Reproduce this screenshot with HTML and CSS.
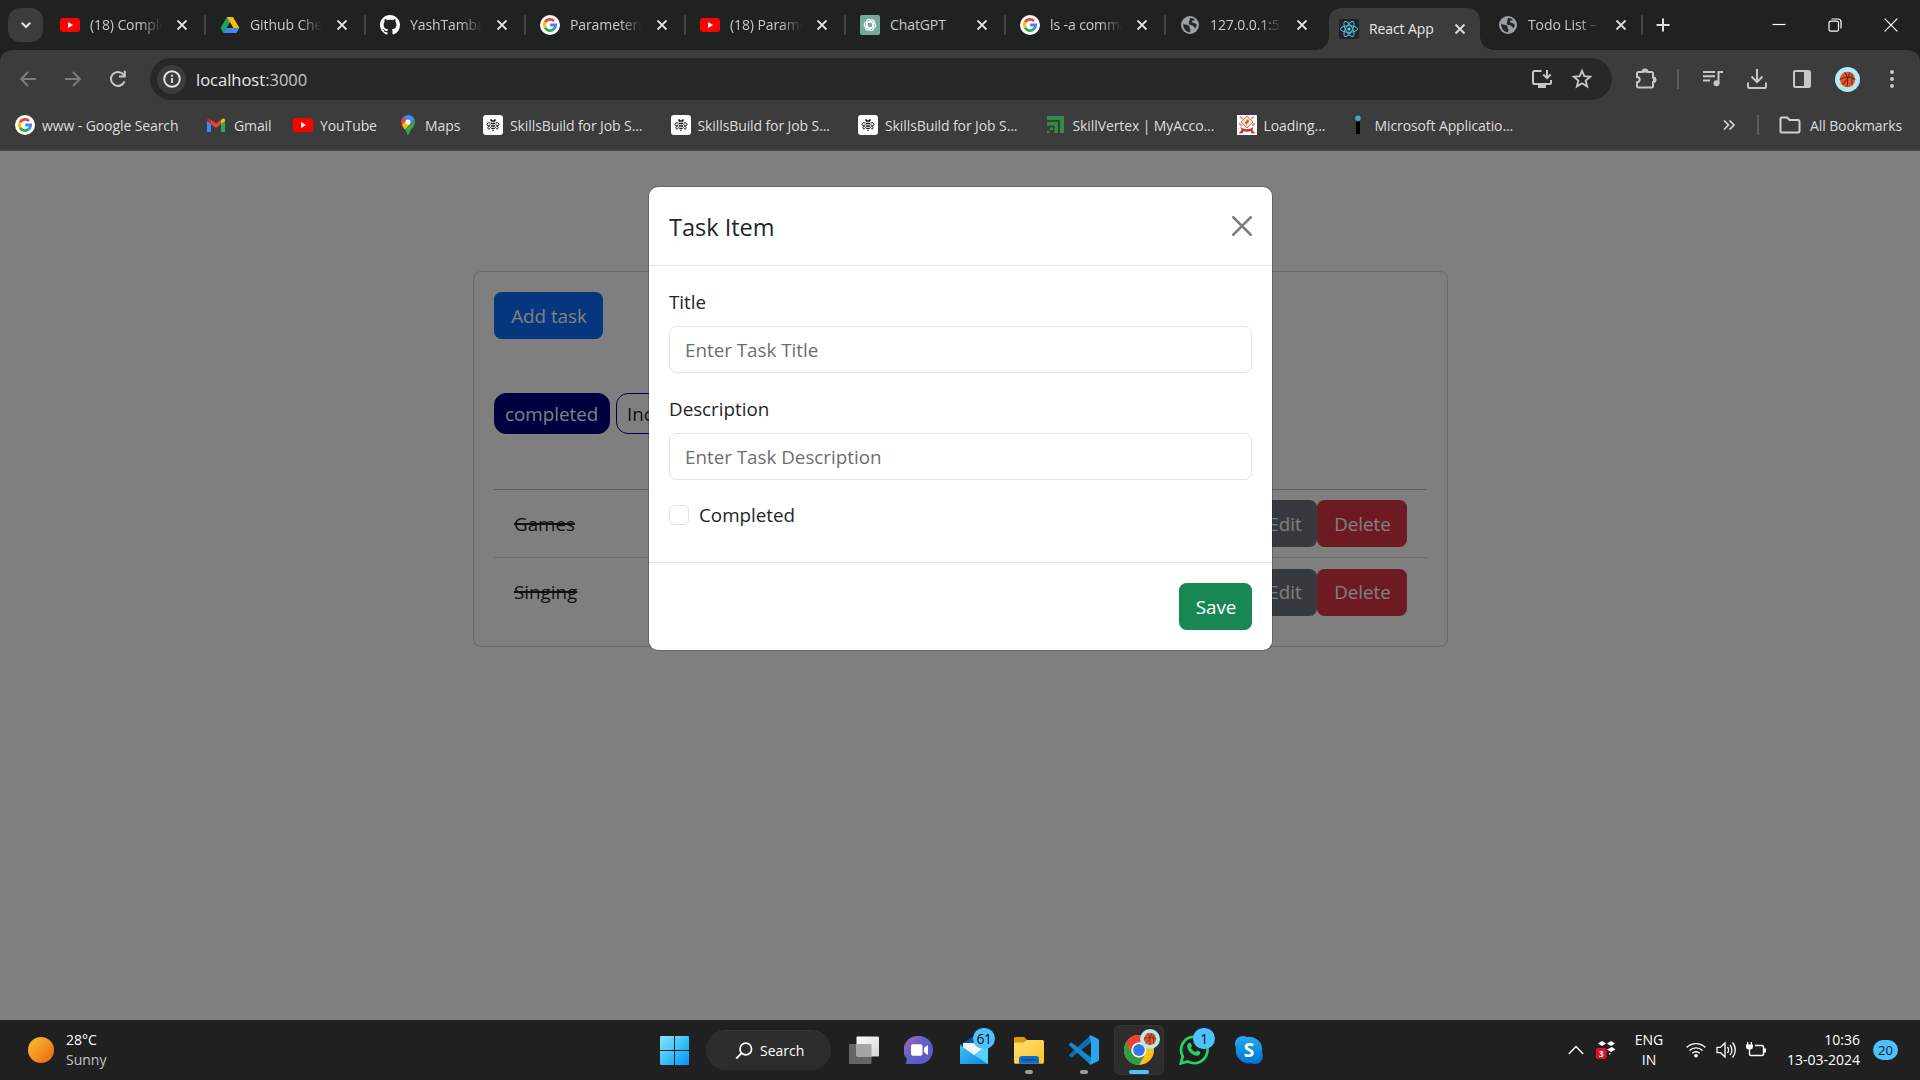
FILE: index.html
```html
<!DOCTYPE html>
<html lang="en">
<head>
<meta charset="utf-8">
<title>React App</title>
<link rel="stylesheet" href="styles.css">
</head>
<body>
<svg class="defs" width="0" height="0" aria-hidden="true">
  <defs>
    <linearGradient id="gWin" x1="0" y1="0" x2="1" y2="1"><stop offset="0" stop-color="#8be4ff"/><stop offset=".5" stop-color="#3cc3fb"/><stop offset="1" stop-color="#0094f8"/></linearGradient>
    <linearGradient id="gView" x1="0" y1="0" x2="1" y2="1"><stop offset="0" stop-color="#fff"/><stop offset="1" stop-color="#d2d2d2"/></linearGradient>
    <linearGradient id="gChat" x1="0" y1="0" x2="1" y2="1"><stop offset="0" stop-color="#a66fb0"/><stop offset=".45" stop-color="#625fca"/><stop offset="1" stop-color="#5558cc"/></linearGradient>
    <linearGradient id="gMail" x1="0" y1="0" x2="1" y2="1"><stop offset="0" stop-color="#35c5f5"/><stop offset="1" stop-color="#1583dc"/></linearGradient>
    <linearGradient id="gFold" x1="0" y1="0" x2="1" y2="1"><stop offset="0" stop-color="#ffdf72"/><stop offset="1" stop-color="#fbc22b"/></linearGradient>
    <linearGradient id="gSkype" x1="0" y1="0" x2="0" y2="1"><stop offset="0" stop-color="#23a9ee"/><stop offset="1" stop-color="#0078d4"/></linearGradient>
  </defs>
  <symbol id="yt" viewBox="0 0 20 20"><rect y="3" width="20" height="14" rx="3" fill="#f00"/><path d="M8 7v6l5-3z" fill="#fff"/></symbol>
  <symbol id="google" viewBox="0 0 20 20"><circle cx="10" cy="10" r="10" fill="#fff"/><g fill="none" stroke-width="2.8"><path d="M5.1 7.2A5.6 5.6 0 0 1 14 6" stroke="#ea4335"/><path d="M5.1 12.8a5.6 5.6 0 0 1 0-5.6" stroke="#fbbc05"/><path d="M13.8 14.1a5.6 5.6 0 0 1-8.7-1.3" stroke="#34a853"/><path d="M10.2 10h5.4a5.6 5.6 0 0 1-1.8 4.1" stroke="#4285f4"/></g></symbol>
  <symbol id="drive" viewBox="0 0 20 20"><path d="M7 2h6l-6.500 11.200L3.500 18 .6 13z" fill="#1ea362"/><path d="M7 2h6l6.400 11h-6z" fill="#fbbc04"/><path d="M6.500 13h12.900l-2.900 5H3.500z" fill="#4285f4"/></symbol>
  <symbol id="github" viewBox="0 0 16 16"><path fill="#fff" d="M8 0C3.580 0 0 3.580 0 8c0 3.540 2.290 6.530 5.470 7.590.4.070.55-.17.55-.38 0-.19-.01-.82-.01-1.490-2.010.37-2.530-.49-2.690-.94-.09-.23-.48-.94-.82-1.130-.28-.15-.68-.52-.01-.53.63-.01 1.080.58 1.230.82.72 1.210 1.870.87 2.330.66.070-.52.28-.87.510-1.070-1.780-.2-3.640-.89-3.640-3.950 0-.87.310-1.590.82-2.150-.08-.2-.36-1.020.08-2.120 0 0 .67-.21 2.200.82.64-.18 1.320-.27 2-.27s1.360.09 2 .27c1.530-1.040 2.200-.82 2.200-.82.44 1.100.16 1.920.08 2.120.51.56.82 1.270.82 2.150 0 3.070-1.870 3.750-3.650 3.950.29.25.54.73.54 1.480 0 1.070-.01 1.930-.01 2.200 0 .21.15.46.55.38A8.010 8.010 0 0 0 16 8c0-4.420-3.580-8-8-8z"/></symbol>
  <symbol id="gpt" viewBox="0 0 20 20"><rect width="20" height="20" rx="2" fill="#74aa9c"/><g fill="none" stroke="#fff" stroke-width="1.200"><path id="petal" d="M10 6.600 13 8.300v4.200l-3.600 2.100a2.700 2.700 0 0 1-4.100-2.300"/><use href="#petal" transform="rotate(60 10 10)"/><use href="#petal" transform="rotate(120 10 10)"/><use href="#petal" transform="rotate(180 10 10)"/><use href="#petal" transform="rotate(240 10 10)"/><use href="#petal" transform="rotate(300 10 10)"/></g></symbol>
  <symbol id="globe" viewBox="0 0 20 20"><circle cx="10" cy="10" r="9" fill="#9aa0a6"/><path d="M3.200 8.500c2 1.600 5 1.200 6 2.300.8 1-.2 2 .8 2.800 1 .7.400 2-.2 3.600C5.500 17 3 13 3.200 8.500zM10 3c1.500-.3 4 .7 5 2-1 .8-2.500.4-3 1.300-.4 1 .3 1.500 1.500 1.400 1.500 0 2 1.200 3.300 1.800 0 1.200-.4 2.500-1.200 3.500-1.200.2-1.600-1.600-2.600-2.300-1.500-.8-4-.2-4.200-2.200C8.800 6.800 9.500 6 10 3z" fill="#26292a"/></symbol>
  <symbol id="react" viewBox="0 0 20 20"><rect width="20" height="20" rx="2" fill="#20232a"/><g fill="none" stroke="#53c1de" stroke-width="1"><ellipse cx="10" cy="10" rx="8.500" ry="3.300"/><ellipse cx="10" cy="10" rx="8.500" ry="3.300" transform="rotate(60 10 10)"/><ellipse cx="10" cy="10" rx="8.500" ry="3.300" transform="rotate(120 10 10)"/></g><circle cx="10" cy="10" r="1.600" fill="#61dafb"/></symbol>
  <symbol id="x" viewBox="0 0 12 12"><path d="m1.500 1.500 9 9m0-9-9 9" fill="none" stroke="currentColor" stroke-width="1.800"/></symbol>
  <symbol id="bee" viewBox="0 0 20 20"><rect width="20" height="20" rx="3" fill="#fff"/><g fill="#161616"><path d="M7.300 4.200h1.400l.5 1h1.600l.5-1h1.400v1.500l-.8 1.100H8.100l-.8-1.100zM8 7.700h4v1.600H8zM8 10.300h4v1.500H8zM8 12.700h4l-.5 1.200h-3zM8.800 14.700h2.400L10 16.300z"/></g><g fill="none" stroke="#161616" stroke-width="1"><path d="M7.500 8C5 7 3.600 8.700 4 10c.5 1 2.200.7 3.500-.6M12.500 8c2.500-1 3.900.7 3.500 2-.5 1-2.200.7-3.500-.6M7.300 11c-2 0-3 1.500-2.300 2.600.8.900 2 .2 2.600-1.300M12.700 11c2 0 3 1.500 2.300 2.600-.8.900-2 .2-2.600-1.300"/></g></symbol>
  <symbol id="ball" viewBox="0 0 26 26"><circle cx="13" cy="13" r="13" fill="#b2ebf2"/><circle cx="13" cy="13" r="8" fill="#f4511e"/><path d="M5 13c5-3 11-3 16 0M10 5.600c3 4 4 9 2.500 15M15.500 5.400c-1 5-4 9.600-8 13M18 7c-1 4-.5 8 0 12" fill="none" stroke="#4e342e" stroke-width="1.100"/></symbol>
</svg>

<header class="browser">
  <div class="tabstrip">
    <button class="tab-search"><svg width="12" height="12" viewBox="0 0 12 12"><path d="m1.800 3.800 4.200 4.200 4.200-4.200" fill="none" stroke="#e3e3e3" stroke-width="2"/></svg></button>
    <div class="tab"><svg class="fav"><use href="#yt"/></svg><span class="tab-title fade">(18) Complete</span><svg class="tab-x"><use href="#x"/></svg></div>
    <div class="tab"><svg class="fav"><use href="#drive"/></svg><span class="tab-title fade">Github Cheat</span><svg class="tab-x"><use href="#x"/></svg></div>
    <div class="tab"><svg class="fav"><use href="#github"/></svg><span class="tab-title fade">YashTambade</span><svg class="tab-x"><use href="#x"/></svg></div>
    <div class="tab"><svg class="fav"><use href="#google"/></svg><span class="tab-title fade">Parameters</span><svg class="tab-x"><use href="#x"/></svg></div>
    <div class="tab"><svg class="fav"><use href="#yt"/></svg><span class="tab-title fade">(18) Parameter</span><svg class="tab-x"><use href="#x"/></svg></div>
    <div class="tab"><svg class="fav"><use href="#gpt"/></svg><span class="tab-title">ChatGPT</span><svg class="tab-x"><use href="#x"/></svg></div>
    <div class="tab"><svg class="fav"><use href="#google"/></svg><span class="tab-title fade">ls -a command</span><svg class="tab-x"><use href="#x"/></svg></div>
    <div class="tab no-line"><svg class="fav"><use href="#globe"/></svg><span class="tab-title fade">127.0.0.1:5500</span><svg class="tab-x"><use href="#x"/></svg></div>
    <div class="tab active"><svg class="fav"><use href="#react"/></svg><span class="tab-title">React App</span><svg class="tab-x"><use href="#x"/></svg></div>
    <div class="tab last"><svg class="fav"><use href="#globe"/></svg><span class="tab-title fade">Todo List – A</span><svg class="tab-x"><use href="#x"/></svg></div>
    <svg class="new-tab" width="14" height="14" viewBox="0 0 14 14"><path d="M7 .5v13M.5 7h13" stroke="#dedede" stroke-width="2"/></svg>
    <div class="window-controls">
      <svg width="14" height="14" viewBox="0 0 14 14"><path d="M.5 6.500h13" stroke="#fff" stroke-width="1.200"/></svg>
      <svg width="14" height="14" viewBox="0 0 14 14"><g fill="none" stroke="#fff" stroke-width="1.200"><rect x="1" y="3.200" width="9.500" height="10" rx="1.800"/><path d="M3.500 1H10a3 3 0 0 1 3 3v6.500"/></g></svg>
      <svg width="14" height="14" viewBox="0 0 14 14"><path d="m.7.7 12.600 12.600m0-12.600L.7 13.300" stroke="#fff" stroke-width="1.200"/></svg>
    </div>
  </div>

  <div class="toolbar">
    <div class="nav">
      <svg width="20" height="20" viewBox="0 0 20 20"><path d="M18 10H3.500M10 3l-7 7 7 7" fill="none" stroke="#7d7d7d" stroke-width="1.900"/></svg>
      <svg width="20" height="20" viewBox="0 0 20 20"><path d="M2 10h14.500M10 3l7 7-7 7" fill="none" stroke="#7d7d7d" stroke-width="1.900"/></svg>
      <svg width="20" height="20" viewBox="0 0 20 20"><path d="M16.500 12.300A7 7 0 1 1 15.300 5.400l1.700 1.800" fill="none" stroke="#c7c7c7" stroke-width="2"/><path d="M17.800 1.800v6.700H11V6.500h4.800V1.800z" fill="#c7c7c7"/></svg>
    </div>
    <div class="omnibox">
      <span class="site-info"><svg width="18" height="18" viewBox="0 0 18 18"><circle cx="9" cy="9" r="7.800" fill="none" stroke="#e3e3e3" stroke-width="1.900"/><path d="M8.100 8h1.800v5H8.100zM8.100 4.800h1.800v1.900H8.100z" fill="#e3e3e3"/></svg></span>
      <span class="url">localhost<span class="port">:3000</span></span>
      <svg class="install" width="22" height="20" viewBox="0 0 22 20"><g fill="none" stroke="#c7c7c7" stroke-width="2"><path d="M10.500 2H3.500C2.500 2 2 2.500 2 3.500v10c0 1 .5 1.500 1.500 1.500h15c1 0 1.500-.5 1.500-1.500V11M16 1v7.500M12.300 5.500 16 9.200l3.700-3.700"/></g><path d="M7 15h8v4H7z" fill="#c7c7c7"/></svg>
      <svg width="22" height="22" viewBox="0 0 22 22"><path d="m11 2.800 2.300 5.400 5.900.5-4.500 3.900 1.400 5.800L11 15.300l-5.100 3.100 1.400-5.800-4.500-3.900 5.900-.5z" fill="none" stroke="#c7c7c7" stroke-width="1.900"/></svg>
    </div>
    <div class="actions">
      <svg class="ext" width="22" height="24" viewBox="0 0 22 24"><path d="M3.500 5h4a2.500 2.500 0 0 1 5 0h4c1 0 1.500.5 1.500 1.500v4a2.300 2.300 0 0 1 0 4.600v4c0 1-.5 1.500-1.500 1.500h-13C2.500 20.600 2 20.100 2 19.100v-3.800a2.700 2.700 0 0 0 0-5.400V6.500C2 5.500 2.500 5 3.500 5z" fill="none" stroke="#c7c7c7" stroke-width="2"/><path d="M7.500 5.500V3.300L10 1.800l2.500 1.500v2.200zM18 10h2.500l1 2.800-1 2.700H18z" fill="#c7c7c7"/></svg>
      <i class="bar"></i>
      <svg class="media" width="22" height="20" viewBox="0 0 22 20"><path d="M1 3h12M1 7.300h12M1 11.600h7M16.500 14V3H21" fill="none" stroke="#c7c7c7" stroke-width="2"/><circle cx="14.500" cy="14.300" r="3" fill="#c7c7c7"/></svg>
      <svg class="dl" width="22" height="22" viewBox="0 0 22 22"><path d="M11 1v12.500M5.500 8.500 11 14l5.500-5.500M2 14.500v4c0 1 .5 1.500 1.500 1.500h15c1 0 1.500-.5 1.500-1.500v-4" fill="none" stroke="#c7c7c7" stroke-width="2"/></svg>
      <svg class="side" width="20" height="20" viewBox="0 0 20 20"><rect x="2" y="2" width="16" height="16" rx="1.500" fill="none" stroke="#c7c7c7" stroke-width="2"/><path d="M12 2h6v16h-6z" fill="#c7c7c7"/></svg>
      <svg class="avatar" width="25" height="25"><use href="#ball"/></svg>
      <svg class="dots" width="6" height="20" viewBox="0 0 6 20" fill="#c7c7c7"><circle cx="3" cy="3" r="2"/><circle cx="3" cy="10" r="2"/><circle cx="3" cy="17" r="2"/></svg>
    </div>
  </div>

  <nav class="bookmarks">
    <a class="bm w-www"><svg class="fav"><use href="#google"/></svg>www - Google Search</a>
    <a class="bm w-gmail"><svg class="fav" viewBox="0 0 20 20"><path d="M1 4.500V17h4V8.500z" fill="#4285f4"/><path d="M19 4.500V17h-4V8.500z" fill="#34a853"/><path d="M15 8.500V5l1.500-1.300c1.200-.8 2.500 0 2.500 1.300v1z" fill="#fbbc04"/><path d="M5 8.500V5L3.500 3.700C2.300 2.900 1 3.700 1 5v1z" fill="#c5221f"/><path d="m5 4.800 5 3.800 5-3.800v4.400L10 13 5 9.200z" fill="#ea4335"/></svg>Gmail</a>
    <a class="bm w-yt"><svg class="fav"><use href="#yt"/></svg>YouTube</a>
    <a class="bm w-maps"><svg class="fav" viewBox="0 0 20 20"><path d="M10 0a7 7 0 0 1 6.700 5L10 11 4.800 2.500A7 7 0 0 1 10 0z" fill="#4285f4"/><path d="M4.800 2.500 8 5l-4.200 5C2.500 7 3 4.500 4.800 2.500z" fill="#ea4335"/><path d="m3.800 10 5-5.500L12 9l-5 6z" fill="#fbbc04"/><path d="M16.700 5c.8 3-.2 5.200-2 7.500C12.500 15 11.500 17 10.600 20h-1.200c-.4-2-1.300-3.700-2.400-5z" fill="#34a853"/><circle cx="10" cy="7" r="2.500" fill="#fff"/></svg>Maps</a>
    <a class="bm w-skill"><svg class="fav"><use href="#bee"/></svg>SkillsBuild for Job S...</a>
    <a class="bm w-skill"><svg class="fav"><use href="#bee"/></svg>SkillsBuild for Job S...</a>
    <a class="bm w-skill"><svg class="fav"><use href="#bee"/></svg>SkillsBuild for Job S...</a>
    <a class="bm w-vertex"><svg class="fav" viewBox="0 0 20 20" fill="#2f8d46"><path d="M1 1h17v17h-4V5H1z"/><path d="M1 7h11v11H8.500v-7.500H1zM4 12.500h3V15H4zM1 15.500h2.200V18H1z"/></svg>SkillVertex | MyAcco...</a>
    <a class="bm w-load"><svg class="fav" viewBox="0 0 20 20"><path d="M0 0h20v20H0z" fill="#fff"/><path d="m10 1 6 6-6 6-6-6z" fill="#fae1c8" stroke="#e57373"/><path d="M3 1.500 6 4M17 1.500 14 4M2 8l3 3m13-3-3 3" stroke="#ef9a9a" stroke-width="2"/><path d="M8 7.500 11 4l1 2.500L9 10z" fill="#a36a35"/><path d="M3.500 12c4 3 9 3 13 0l-1 3.300 3 3.200-4-.2-1-2c-2 .6-5 .6-7 0l-1 2-4 .2 3-3.200z" fill="#d32f2f"/></svg>Loading...</a>
    <a class="bm w-ms"><svg class="fav" viewBox="0 0 20 20"><circle cx="10" cy="3.300" r="2.700" fill="#3fb0b5"/><path d="M8 6.500h4V19H8z" fill="#000"/></svg>Microsoft Applicatio...</a>
    <span class="bm-end">
      <svg width="12" height="12" viewBox="0 0 12 12"><path d="m1 1.500 4.500 4.500L1 10.500m5.500-9L11 6l-4.500 4.500" fill="none" stroke="#d5d5d5" stroke-width="1.700"/></svg>
      <i class="bar"></i>
      <svg width="22" height="18" viewBox="0 0 22 18"><path d="M2.500 1.500h5.700l2.300 2.500h8.500c1 0 1.500.5 1.500 1.500v9.500c0 1-.5 1.500-1.500 1.500h-16c-1 0-1.500-.5-1.500-1.500V2.500z" fill="none" stroke="#d0d0d0" stroke-width="2"/></svg>
      <span>All Bookmarks</span>
    </span>
  </nav>
</header>

<main class="viewport">
  <section class="card">
    <button class="btn btn-primary">Add task</button>
    <div class="filters"><span class="pill on">completed</span><span class="pill">Incomplete</span></div>
    <ul class="tasks">
      <li><span class="done">Games</span><span class="row-actions"><button class="btn btn-secondary">Edit</button><button class="btn btn-danger">Delete</button></span></li>
      <li><span class="done">Singing</span><span class="row-actions"><button class="btn btn-secondary">Edit</button><button class="btn btn-danger">Delete</button></span></li>
    </ul>
  </section>
  <div class="backdrop">
    <form class="modal">
      <div class="modal-head"><h5>Task Item</h5><svg width="20" height="20" viewBox="0 0 16 16"><path d="m1 1 14 14M15 1 1 15" stroke="#7f7f7f" stroke-width="2" stroke-linecap="round"/></svg></div>
      <div class="modal-body">
        <label>Title</label>
        <input class="field" type="text" placeholder="Enter Task Title">
        <label>Description</label>
        <input class="field" type="text" placeholder="Enter Task Description">
        <div class="check"><span class="box"></span><span>Completed</span></div>
      </div>
      <div class="modal-foot"><button type="button" class="btn btn-success">Save</button></div>
    </form>
  </div>
</main>

<footer class="taskbar">
  <div class="weather"><i class="sun"></i><div><div>28°C</div><div class="dim">Sunny</div></div></div>
  <div class="apps">
    <svg class="start" width="29" height="29" viewBox="0 0 29 29"><path d="M1 0h13v14H0V1q0-1 1-1zM15 0h13q1 0 1 1v13H15zM0 15h14v14H1q-1 0-1-1zM15 15h14v13q0 1-1 1H15z" fill="url(#gWin)"/></svg>
    <div class="search"><svg width="18" height="18" viewBox="0 0 18 18"><circle cx="10.800" cy="7" r="5.800" fill="none" stroke="#fff" stroke-width="1.700"/><path d="m6.600 11.200-5.400 5.400" stroke="#fff" stroke-width="1.900"/></svg>Search</div>
    <div class="app"><svg width="30" height="30" viewBox="0 0 30 30"><rect x="0" y="9" width="22.500" height="20" rx="1" fill="#656565"/><rect x="7.500" y="1.500" width="22.500" height="20" rx="1" fill="url(#gView)"/><path d="M7.500 9h15v12.500h-15z" fill="#a5a5a5"/></svg></div>
    <div class="app"><svg width="30" height="30" viewBox="0 0 30 30"><path d="M15 1a14 14 0 1 1 0 28H1.300c1-1.500 1.600-3.300 1.600-5A14 14 0 0 1 15 1z" fill="url(#gChat)"/><rect x="7" y="9.300" width="11.500" height="11.500" rx="2" fill="#fff"/><path d="m20 13 3-2.500q1-.5 1 .5v8q0 1-1 .5L20 17z" fill="#fff"/></svg></div>
    <div class="app"><svg width="30" height="30" viewBox="0 0 30 30"><path d="M1 10 15 1l14 9v9H1z" fill="#0a57a5"/><path d="M4 8h22v12H4z" fill="#f4f4f4"/><path d="M1 10v19h28V10L15 20z" fill="url(#gMail)"/><path d="M29 10v19L15 20z" fill="#53d3fb"/></svg><b class="badge">61</b></div>
    <div class="app"><svg width="30" height="30" viewBox="0 0 30 30"><path d="M0 3.500Q0 2 1.500 2H9q1.200 0 2 .8L13 5h10v6H0z" fill="#dc9b08"/><path d="M0 7.500h10L13 5h15.500Q30 5 30 6.500v20.700q0 1.500-1.500 1.500h-27Q0 28.700 0 27.200z" fill="url(#gFold)"/><path d="M5 28.700V24q0-3 3-3h14q3 0 3 3v4.700z" fill="#0f6fc5"/><path d="M8.500 24.800h13" stroke="#0a4a86" stroke-width="1.500" stroke-linecap="round"/></svg><i class="run"></i></div>
    <div class="app"><svg width="30" height="30" viewBox="0 0 30 30"><path d="M22 7.500 3 22.300q-1 .6-1.700-.1L.4 21q-.7-1 .2-1.800L21 .8z" fill="#0c6eb5"/><path d="M22 22.500 3 7.700q-1-.6-1.700.1L.4 9q-.7 1 .2 1.800L21 29.200z" fill="#1488d1"/><path d="m21.500.3 7.400 3.400q1.100.6 1.100 1.800v19q0 1.200-1.100 1.800l-7.400 3.400q-1 .2-1-1l1.500-6.300V7.500l-1.500-6q0-1.400 1-1.200z" fill="#2aa5ef"/></svg><i class="run"></i></div>
    <div class="app current"><svg width="30" height="30" viewBox="0 0 30 30"><circle cx="15" cy="15" r="15" fill="#fbc116"/><path d="M2 7.500A15 15 0 0 1 28 7.500H15a7.500 7.500 0 0 0-6.500 11.200z" fill="#ea4335"/><path d="M2 7.500A15 15 0 0 0 15 30l6.500-11.200a7.500 7.500 0 0 1-13 0z" fill="#2f9e4b"/><circle cx="15" cy="15" r="7.500" fill="#fff"/><circle cx="15" cy="15" r="5.900" fill="#2f78ea"/></svg><svg class="profile" width="20" height="20"><use href="#ball"/></svg><i class="run"></i></div>
    <div class="app"><svg width="30" height="30" viewBox="0 0 30 30"><path d="M1.800 28.300 3.700 21.300A13.200 13.200 0 1 1 8.700 26.400z" fill="none" stroke="#25d366" stroke-width="2.700"/><path d="M10.300 7.800c.8-.3 1.300 0 1.600.6l1 2.400c.2.600-.9 1.600-1.200 2 .9 1.900 2.500 3.400 4.800 4.300.5-.3 1.200-1.700 1.800-1.700l2.800 1.300c.5.400 0 2.800-1.300 3.500-2.200 1.200-5.500-.2-7.500-1.800-2.100-1.700-4.300-4.700-4.100-7.200.1-1.600 1-3 2.100-3.400z" fill="#25d366"/></svg><b class="badge">1</b></div>
    <div class="app"><svg width="30" height="30" viewBox="0 0 30 30"><circle cx="9" cy="9" r="8" fill="#23a9ee"/><circle cx="21" cy="21" r="8" fill="#0078d4"/><circle cx="15" cy="15" r="13.300" fill="url(#gSkype)"/></svg><b class="skype-s">S</b></div>
  </div>
  <div class="tray">
    <svg class="up" width="16" height="10" viewBox="0 0 16 10"><path d="m.8 9 7.200-7.500L15.200 9" fill="none" stroke="#fff" stroke-width="1.400"/></svg>
    <svg class="dropbox" width="20" height="22" viewBox="0 0 20 22"><path d="m6 2 4 2.500L6 7 2 4.500zM15 2l4 2.500L15 7l-4-2.500zM16 8l3.500 2.500L15 13l-4-2.500zM13 14l2 .5-1.500 1.500z" fill="#fff"/><rect x="0" y="9" width="10.500" height="11" rx="2" fill="#e0102b"/><text x="5.200" y="17.500" text-anchor="middle" class="mini">3</text></svg>
    <div class="lang">ENG<br>IN</div>
    <svg class="wifi" width="20" height="18" viewBox="0 0 20 18"><g fill="none" stroke="#fff" stroke-width="1.400"><path d="M.7 6.500a13.200 13.200 0 0 1 18.600 0M3.500 9.500a9.300 9.300 0 0 1 13 0M6.300 12.300a5.300 5.300 0 0 1 7.400 0"/></g><circle cx="10" cy="14.700" r="1.800" fill="#fff"/></svg>
    <svg class="vol" width="20" height="18" viewBox="0 0 20 18"><g fill="none" stroke="#fff" stroke-width="1.300"><path d="M1 6.300h3.500L9 2v14l-4.500-4.300H1z"/><path d="M11.500 6a5 5 0 0 1 0 6M14 3.800a8 8 0 0 1 0 10.400M16.500 1.500a11.500 11.500 0 0 1 0 15"/></g></svg>
    <svg class="bat" width="20" height="18" viewBox="0 0 20 18"><path d="M9 4.500h7q1.500 0 1.500 1.500v7q0 1.500-1.500 1.500H5q-1.500 0-1.500-1.500V8" fill="none" stroke="#fff" stroke-width="1.400"/><path d="M18 7.500h2v4h-2zM0 3.500h7V6q0 2.300-2.500 2.600h-2Q0 8.300 0 6zM1 1h1.300v3H1zM4.700 1H6v3H4.700z" fill="#fff"/></svg>
    <div class="clock">10:36<br>13-03-2024</div>
    <b class="notify">20</b>
  </div>
</footer>
</body>
</html>
```
FILE: styles.css
```css
* { box-sizing: border-box; }
body {
  margin: 0;
  width: 1920px;
  height: 1080px;
  overflow: hidden;
  display: flex;
  flex-direction: column;
  font-family: "Segoe UI", "Open Sans", "Noto Sans", sans-serif;
  font-size: 18.8px;
  color: #212529;
}
svg { display: block; flex: none; }
button, input { font: inherit; }
.defs { position: absolute; }
.fav { width: 20px; height: 20px; flex: none; }

/* browser chrome */
.browser { background: #1f2221; height: 151px; flex: none; font-size: 14px; color: #dedede; }
.tabstrip { display: flex; align-items: center; height: 50px; padding-left: 8px; }
.tab-search {
  width: 35px; height: 34px; margin-right: 3px; padding: 0; border: 0; border-radius: 12px;
  background: #3c3c3c; display: grid; place-items: center;
}
.tab { display: flex; align-items: center; width: 160px; height: 50px; padding-left: 14px; position: relative; color: #c9c9c9; }
.tab::after { content: ""; width: 2px; height: 20px; margin-left: auto; background: #454747; border-radius: 1px; }
.tab.no-line::after { display: none; }
.tab-title { width: 72px; margin: 0 14px 0 10px; overflow: hidden; white-space: nowrap; letter-spacing: -.1px; line-height: 22px; }
.fade { mask-image: linear-gradient(90deg, #000 70%, transparent); }
.tab-x { width: 12px; height: 12px; color: #dedede; }
.tab.active { width: 151px; height: 42px; align-self: flex-end; margin-left: 3px; padding-left: 10px; background: #3c3c3c; border-radius: 12px 12px 0 0; color: #e8e8e8; }
.tab.active .tab-title { margin-right: 13px; }
.tab.active::before, .tab.active::after {
  content: ""; position: absolute; bottom: 0; width: 13px; height: 13px; border-radius: 0;
}
.tab.active::before { left: -13px; background: radial-gradient(circle at 0 0, transparent 12.500px, #3c3c3c 13px); }
.tab.active::after { right: -13px; background: radial-gradient(circle at 100% 0, transparent 12.500px, #3c3c3c 13px); }
.tab.last { width: 163px; padding-left: 18px; }
.tab.last .tab-title { margin-right: 15px; }
.new-tab { margin-left: 13px; }
.window-controls { display: flex; gap: 42px; margin-left: auto; padding-right: 22px; }

.toolbar { display: flex; align-items: flex-start; height: 50px; padding-top: 8px; background: #3c3c3c; border-radius: 12px 12px 0 0; }
.nav { display: flex; align-items: center; gap: 25px; width: 150px; height: 42px; padding-left: 18px; }
.omnibox { display: flex; align-items: center; width: 1462px; height: 42px; padding: 0 19px 0 7px; border-radius: 21px; background: #282828; }
.site-info { width: 29px; height: 29px; border-radius: 50%; background: #3c3c3c; display: grid; place-items: center; }
.url { margin: 0 auto 0 10px; font-size: 16.500px; color: #e8e8e8; }
.port { color: #c7c7c7; }
.install { margin-right: 18px; }
.actions { display: flex; align-items: center; height: 42px; padding-left: 23px; }
.bar { width: 2px; height: 20px; background: #5c5c5c; flex: none; }
.actions .bar { margin: 0 23px 0 20px; }
.media { margin-right: 22px; }
.dl { margin-right: 24px; }
.side { margin-right: 23px; }
.avatar { margin-right: 29px; }

.bookmarks { display: flex; align-items: center; height: 51px; padding-left: 15px; background: #3c3c3c; border-bottom: 1px solid #4a4a4a; letter-spacing: -.1px; }
.bm { display: flex; align-items: center; gap: 7px; white-space: nowrap; }
.w-www { width: 191px; }
.w-gmail { width: 87px; gap: 8px; }
.w-yt { width: 105px; }
.w-maps { width: 85px; }
.w-maps .fav { margin-right: 0; }
.w-skill { width: 187.500px; }
.w-vertex { width: 191px; }
.w-load { width: 111px; }
.bm-end { display: flex; align-items: center; margin-left: auto; padding-right: 18px; }
.bm-end .bar { margin: 0 20px 0 22px; }
.bm-end span { margin-left: 9px; }

/* page */
.viewport { position: relative; height: 869px; flex: none; background: #fff; padding: 120px 472px 0 473px; }
.card { height: 376px; padding: 20px; border: 1px solid rgba(0,0,0,.175); border-radius: 8px; }
.btn { height: 47px; padding: 0 15px 0 16px; border: 0; border-radius: 7.500px; color: #fff; display: block; }
.btn-primary { width: 109px; background: #0d6efd; }
.btn-secondary { width: 65px; background: #6c757d; }
.btn-danger { width: 90px; background: #dc3545; }
.btn-success { width: 73px; background: #198754; font-weight: 500; }
.filters { display: flex; gap: 6px; margin-top: 54px; }
.pill { height: 41px; padding: 0 10px; border: 1px solid navy; border-radius: 12px; line-height: 41px; }
.pill.on { width: 116px; background: #000080; color: #fff; }
.tasks { list-style: none; margin: 55px 0 0; padding: 0; border-top: 1px solid rgba(0,0,0,.25); }
.tasks li { display: flex; justify-content: space-between; align-items: center; height: 68px; padding: 0 20px; border-bottom: 1px solid rgba(0,0,0,.15); }
.tasks li:last-child { border: 0; }
.done { text-decoration: line-through; text-decoration-thickness: 2px; }
.row-actions { display: flex; }
.backdrop { position: absolute; inset: 0; background: rgba(0,0,0,.5); padding-top: 36px; }
.modal { width: 623px; height: 463px; margin: 0 auto 0 649px; background: #fff; border-radius: 9px; box-shadow: 0 0 0 1px rgba(0,0,0,.2); }
.modal-head { display: flex; align-items: center; justify-content: space-between; height: 79px; padding: 0 20px; border-bottom: 1px solid #dee2e6; }
.modal-head h5 { margin: 2px 0 0; font-size: 23.500px; font-weight: 500; }
.modal-body { height: 296px; padding: 20px; }
.modal-body label { display: block; height: 40px; line-height: 32px; }
.field { display: block; width: 100%; height: 47px; margin-bottom: 20px; padding: 0 15px; border: 1px solid #dee2e6; border-radius: 7.500px; }
.field::placeholder { color: #6b6e71; opacity: 1; }
.check { display: flex; align-items: center; gap: 10px; height: 30px; }
.box { width: 20px; height: 20px; border: 1px solid #dee2e6; border-radius: 5px; }
.modal-foot { display: flex; justify-content: flex-end; padding: 20px; border-top: 1px solid #dee2e6; }

/* taskbar */
.taskbar { display: flex; height: 60px; flex: none; background: #202020; color: #fff; font-size: 14px; }
.weather { display: flex; align-items: center; gap: 12px; width: 660px; padding-left: 28px; line-height: 20px; }
.sun { width: 26px; height: 26px; border-radius: 50%; background: linear-gradient(135deg, #f2c335, #f3931f 50%, #f0620a); }
.dim { color: #c4c4c4; }
.apps { display: flex; align-items: center; }
.start { margin-right: 17px; }
.search { display: flex; align-items: center; gap: 7px; width: 125px; height: 40px; padding-left: 29px; margin-right: 5px; border-radius: 20px; background: #2d2d2d; border-top: 1px solid #363636; }
.app { position: relative; display: grid; place-items: center; width: 50px; height: 50px; margin: 0 2px 0 3px; border-radius: 6px; }
.app.current { background: #2d2d2d; border: 1px solid #353535; }
.run { position: absolute; bottom: 1px; width: 8px; height: 4px; border-radius: 2px; background: #9a9a9a; }
.current .run { width: 20px; bottom: 0; background: #4cc2ff; }
.badge { position: absolute; top: 3px; left: 24px; width: 22px; height: 21px; border-radius: 11px; background: #4cc2ff; color: #111; font-weight: 400; line-height: 21px; text-align: center; letter-spacing: -.6px; }
.profile { position: absolute; top: 3px; left: 25px; }
.skype-s { position: absolute; font-size: 19px; }
.tray { display: flex; align-items: center; margin-left: auto; padding-right: 22px; line-height: 20px; }
.up { margin-right: 12px; }
.dropbox { margin-right: 18px; }
.mini { fill: #fff; font-size: 8px; font-weight: 700; }
.lang { width: 30px; margin-right: 22px; text-align: center; }
.wifi, .vol { margin-right: 10px; }
.clock { width: 94px; text-align: right; white-space: nowrap; }
.notify { width: 25px; height: 20px; margin-left: 13px; border-radius: 10px; background: #4cc2ff; color: #111; font-size: 13px; font-weight: 400; text-align: center; }
```
